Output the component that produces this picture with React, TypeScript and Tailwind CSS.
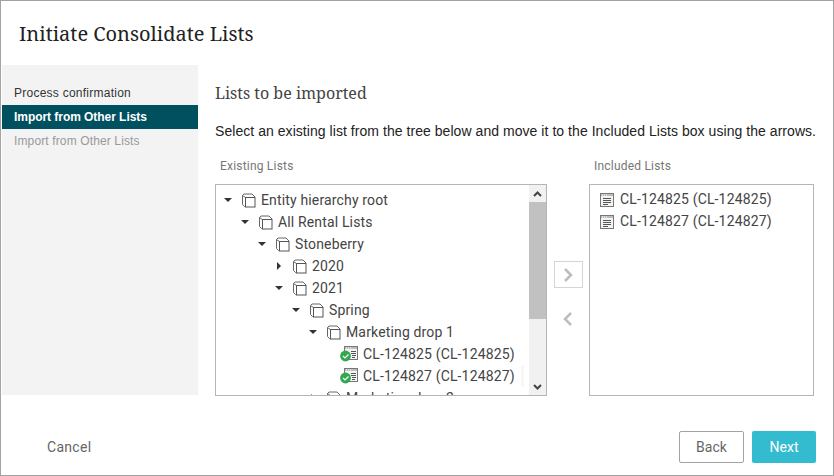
const SANS = "font-['Liberation_Sans',Arial,sans-serif]";
const ROBOTO = "font-['Roboto',Arial,sans-serif]";
const SERIF = "font-['Noto_Serif','DejaVu_Serif',serif]";

function Caret({ open }: { open: boolean }) {
  return (
    <svg width="8" height="8" viewBox="0 0 8 8" className="shrink-0">
      {open ? <path d="M0 2h8L4 6z" fill="#333" /> : <path d="M2 0v8l4-4z" fill="#333" />}
    </svg>
  );
}

function StackIcon() {
  return (
    <svg width="15" height="15" viewBox="0 0 15 15" fill="none" stroke="#555" strokeWidth="1" className="shrink-0">
      <path d="M4.500 13.500h-1l-2-2V2.500l1.500-1.500h8l3 3M1.500 2.500l3 2" stroke="#666" />
      <rect x="4.500" y="4.500" width="9.500" height="9.500" />
    </svg>
  );
}

function ListIcon() {
  return (
    <svg width="15" height="15" viewBox="0 0 15 15" className="shrink-0">
      <rect x="1.500" y="1.500" width="13" height="13" fill="#f4f4f4" stroke="#777" />
      <path d="M2 2h12v2H2z" fill="#bdbdbd" />
      <path d="M3 3h1M5 3h1M7 3h1" stroke="#fff" />
      <path d="M4 6.500h8M4 8.500h8M4 10.500h8M4 12.500h5" stroke="#555" />
    </svg>
  );
}

function CheckedListIcon() {
  return (
    <svg width="18" height="16" viewBox="0 0 18 16" className="shrink-0">
      <rect x="4.500" y="0.500" width="13" height="13" fill="#f4f4f4" stroke="#777" />
      <path d="M5 1h12v2H5z" fill="#bdbdbd" />
      <path d="M6 2h1M8 2h1M10 2h1" stroke="#fff" />
      <path d="M11 5.500h5M11 7.500h5M12 9.500h4M12 11.500h3" stroke="#555" />
      <circle cx="5.500" cy="10" r="5.400" fill="#2fa84f" />
      <path d="M3 10l2 2 3.500-3.500" fill="none" stroke="#fff" strokeWidth="1.200" />
    </svg>
  );
}

type Node = { label: string; level: number; caret?: "open" | "closed"; leaf?: boolean };

const NODES: Node[] = [
  { label: "Entity hierarchy root", level: 0, caret: "open" },
  { label: "All Rental Lists", level: 1, caret: "open" },
  { label: "Stoneberry", level: 2, caret: "open" },
  { label: "2020", level: 3, caret: "closed" },
  { label: "2021", level: 3, caret: "open" },
  { label: "Spring", level: 4, caret: "open" },
  { label: "Marketing drop 1", level: 5, caret: "open" },
  { label: "CL-124825 (CL-124825)", level: 6, leaf: true },
  { label: "CL-124827 (CL-124827)", level: 6, leaf: true },
  { label: "Marketing drop 2", level: 5, caret: "closed" },
];

function TreeRow({ node }: { node: Node }) {
  return (
    <div className="flex h-[22px] shrink-0 items-center" style={{ paddingLeft: 8 + node.level * 17 }}>
      {node.leaf ? (
        <div className="flex items-center pl-[14px]">
          <CheckedListIcon />
        </div>
      ) : (
        <>
          <Caret open={node.caret === "open"} />
          <div className="ml-[9px]">
            <StackIcon />
          </div>
        </>
      )}
      <span className="ml-[5px] whitespace-nowrap">{node.label}</span>
    </div>
  );
}

function Scrollbar() {
  return (
    <div className="flex w-[17px] shrink-0 flex-col bg-[#f1f1f1]">
      <div className="flex h-[17px] items-center justify-center">
        <svg width="9" height="6" viewBox="0 0 9 6" fill="none" stroke="#444" strokeWidth="2">
          <path d="M1 5l3.500-3.500L8 5" />
        </svg>
      </div>
      <div className="h-[117px] bg-[#c1c1c1]" />
      <div className="flex-1" />
      <div className="flex h-[17px] items-center justify-center">
        <svg width="9" height="6" viewBox="0 0 9 6" fill="none" stroke="#444" strokeWidth="2">
          <path d="M1 1l3.500 3.500L8 1" />
        </svg>
      </div>
    </div>
  );
}

export default function App() {
  return (
    <div className={`flex h-[476px] w-[834px] flex-col overflow-hidden border border-[#a3a3a3] bg-white ${SANS}`}>
      <div className={`flex h-[64px] shrink-0 items-center pt-[2px] pl-[18px] text-[20px] leading-none text-[#222] ${SERIF}`}>
        Initiate Consolidate Lists
      </div>

      <div className="flex h-[330px] shrink-0">
        <div className="ml-px w-[196px] shrink-0 bg-[#f3f3f3] pt-4 text-[12px] font-normal">
          <div className="flex h-6 items-center pl-3 tracking-[0.25px] text-[#333]">Process confirmation</div>
          <div className="flex h-6 items-center bg-[#00505f] pl-3 font-bold tracking-[-0.05px] text-white">Import from Other Lists</div>
          <div className="flex h-6 items-center pl-3 tracking-[0.13px] text-[#999]">Import from Other Lists</div>
        </div>

        <div className="min-w-0 flex-1 pl-[17px]">
          <h2 className={`mt-[18px] h-5 text-[16px] leading-5 text-[#444] ${SERIF}`}>Lists to be imported</h2>
          <p className="mt-[20px] whitespace-nowrap text-[14px] leading-4 tracking-[0.05px] text-[#222]">
            Select an existing list from the tree below and move it to the Included Lists box using the arrows.
          </p>
          <div className={`mt-[18px] flex ${ROBOTO}`}>
            <div className="w-[332px] shrink-0">
              <div className="h-[27px] pl-[5px] text-[12px] leading-[18px] tracking-[0.2px] text-[#777]">Existing Lists</div>
              <div className="flex h-[212px] border border-[#b5b5b5] text-[14px] tracking-[0.15px] text-[#444]">
                <div className="relative flex min-w-0 flex-1 flex-col overflow-hidden pt-[4px]">
                  {NODES.map((node) => (
                    <TreeRow key={node.label} node={node} />
                  ))}
                  <div className="absolute top-[180px] right-[5px] h-[22px] w-[3px] bg-[#f7f7f7]" />
                </div>
                <Scrollbar />
              </div>
            </div>

            <div className="flex w-[42px] shrink-0 flex-col items-center pt-[104px]">
              <button className="flex h-[27px] w-[29px] items-center justify-center border border-[#d5d5d5] bg-white">
                <svg width="10" height="14" viewBox="0 0 10 14" fill="none" stroke="#bdbdbd" strokeWidth="2.500">
                  <path d="M2 1l6 6-6 6" />
                </svg>
              </button>
              <div className="mt-[17px] flex h-[27px] w-[29px] items-center justify-center">
                <svg width="10" height="14" viewBox="0 0 10 14" fill="none" stroke="#bdbdbd" strokeWidth="2.500">
                  <path d="M8 1L2 7l6 6" />
                </svg>
              </div>
            </div>

            <div className="w-[225px] shrink-0">
              <div className="h-[27px] pl-[5px] text-[12px] leading-[18px] tracking-[0.2px] text-[#777]">Included Lists</div>
              <div className="h-[212px] border border-[#b5b5b5] pt-[3px] text-[14px] tracking-[0.15px] text-[#444]">
                {["CL-124825 (CL-124825)", "CL-124827 (CL-124827)"].map((label) => (
                  <div key={label} className="flex h-[22px] items-center pl-[9px]">
                    <ListIcon />
                    <span className="ml-[6px]">{label}</span>
                  </div>
                ))}
              </div>
            </div>
          </div>
        </div>
      </div>

      <div className={`flex flex-1 items-center pt-[23px] pr-[17px] pl-[46px] text-[14px] ${ROBOTO}`}>
        <span className="pt-[2px] tracking-[0.3px] text-[#666]">Cancel</span>
        <button className="ml-auto h-8 w-[65px] rounded-[2px] border border-[#a3a3a3] bg-white pt-px text-[#666]">Back</button>
        <button className="ml-2 h-8 w-[64px] rounded-[2px] bg-[#33bbcf] pt-px text-white">Next</button>
      </div>
    </div>
  );
}
